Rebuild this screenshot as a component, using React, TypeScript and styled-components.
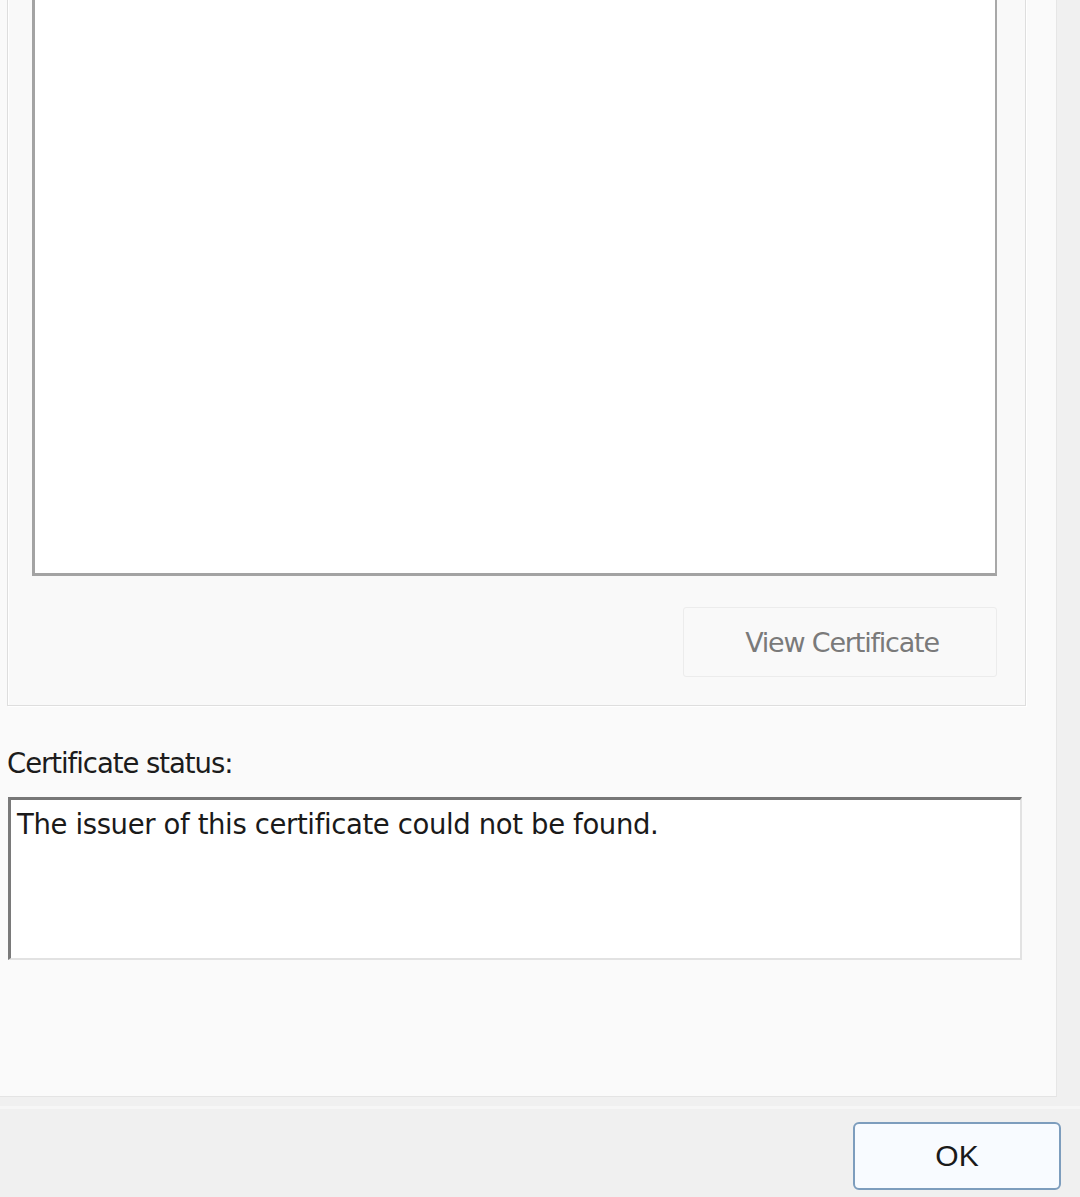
import React from "react";
import styled, { createGlobalStyle } from "styled-components";

const Global = createGlobalStyle`
  html, body { margin: 0; padding: 0; background: #f0f0f0; }
  body { width: 1080px; height: 1197px; overflow: hidden; font-family: "DejaVu Sans", Tahoma, sans-serif; }
`;

const Dialog = styled.div`
  width: 1080px;
  height: 1197px;
  display: flex;
  flex-direction: column;
  background: #f0f0f0;
  overflow: hidden;
`;

const TabPanel = styled.div`
  width: 1057px;
  height: 1097px;
  flex: none;
  box-sizing: border-box;
  background: #fafafa;
  border-right: 1px solid #e6e6e6;
  border-bottom: 1px solid #e4e4e4;
  display: flex;
  flex-direction: column;
  overflow: hidden;
`;

const GroupBox = styled.div`
  margin: -40px 0 0 7px;
  width: 1019px;
  height: 746px;
  flex: none;
  box-sizing: border-box;
  border: 1px solid #dedede;
  box-shadow: inset 1px 1px 0 #ffffff, 1px 1px 0 #ffffff;
  background: #f9f9f9;
  display: flex;
  flex-direction: column;
  align-items: flex-end;
  padding: 0 28px 28px 24px;
`;

const ListArea = styled.div`
  width: 965px;
  flex: 1;
  box-sizing: border-box;
  background: #ffffff;
  border-left: 3px solid #a3a3a3;
  border-bottom: 3px solid #a3a3a3;
  border-right: 2px solid #a8a8a8;
`;

const DisabledButton = styled.div`
  margin-top: 31px;
  width: 314px;
  height: 70px;
  box-sizing: border-box;
  border: 1px solid #ececec;
  border-radius: 3px;
  background: #f9f9f9;
  display: flex;
  align-items: center;
  justify-content: center;
  color: #7a7a7a;
  font-size: 27px;
  letter-spacing: -1.2px;
  padding-left: 4px;
`;

const StatusLabel = styled.div`
  margin: 40px 0 0 7px;
  height: 34px;
  font-size: 27.5px;
  letter-spacing: -1.05px;
  color: #1c1c1c;
  line-height: 34px;
`;

const StatusBox = styled.div`
  margin: 17px 0 0 8px;
  width: 1014px;
  height: 163px;
  box-sizing: border-box;
  background: #ffffff;
  border-top: 3px solid #777777;
  border-left: 3px solid #7a7a7a;
  border-right: 2px solid #e2e2e2;
  border-bottom: 2px solid #e2e2e2;
  padding: 5px 0 0 6px;
  font-size: 27.5px;
  letter-spacing: -0.37px;
  line-height: 38px;
  color: #1a1a1a;
`;

const Footer = styled.div`
  flex: 1;
  display: flex;
  justify-content: flex-end;
  align-items: flex-start;
  padding: 13px 19px 0 0;
  border-top: 3px solid #f6f6f6;
  margin-top: 9px;
`;

const OkButton = styled.div`
  width: 208px;
  height: 68px;
  box-sizing: border-box;
  border: 2px solid #7d9dbd;
  border-radius: 6px;
  background: #f8fbff;
  display: flex;
  align-items: center;
  justify-content: center;
  font-family: "Liberation Sans", Arial, sans-serif;
  font-size: 30px;
  color: #1a1a1a;
`;

export default function App() {
  return (
    <Dialog>
      <Global />
      <TabPanel>
        <GroupBox>
          <ListArea />
          <DisabledButton>View Certificate</DisabledButton>
        </GroupBox>
        <StatusLabel>Certificate status:</StatusLabel>
        <StatusBox>The issuer of this certificate could not be found.</StatusBox>
      </TabPanel>
      <Footer>
        <OkButton>OK</OkButton>
      </Footer>
    </Dialog>
  );
}
